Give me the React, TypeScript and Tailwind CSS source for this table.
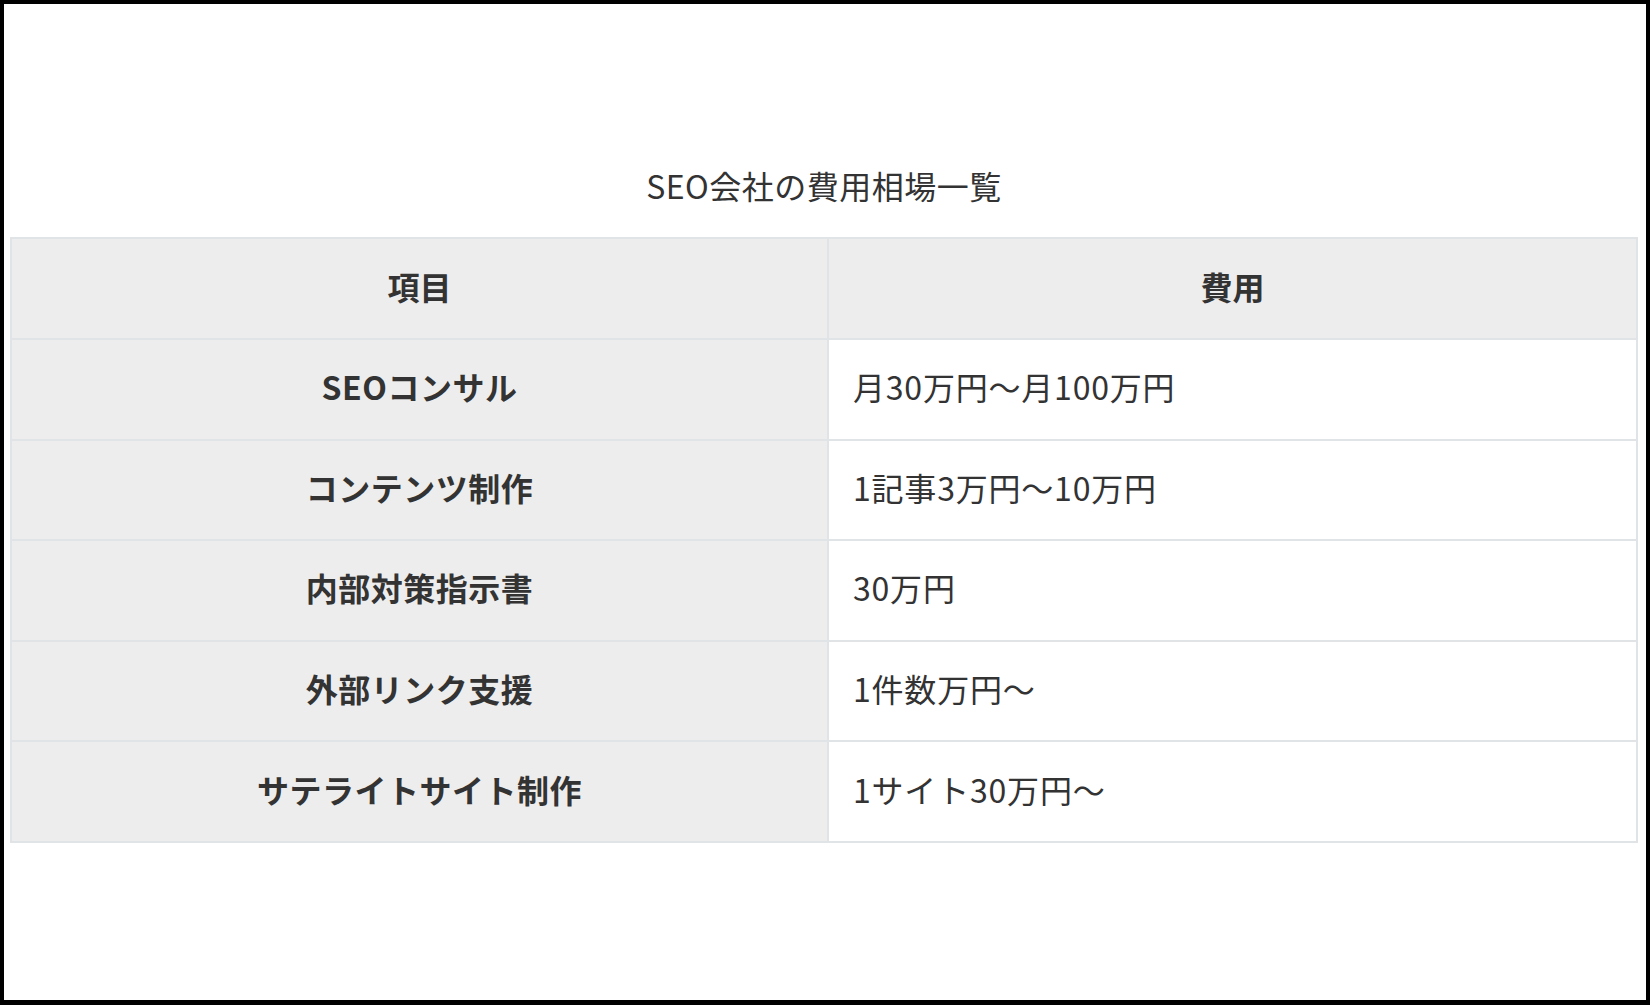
import React from 'react';

const rows: [string, string][] = [
  ['SEOコンサル', '月30万円〜月100万円'],
  ['コンテンツ制作', '1記事3万円〜10万円'],
  ['内部対策指示書', '30万円'],
  ['外部リンク支援', '1件数万円〜'],
  ['サテライトサイト制作', '1サイト30万円〜'],
];

export default function App() {
  return (
    <div
      className="w-[1650px] h-[1005px] bg-black pt-[4px] pl-[4px] pr-[4px] pb-[5px]"
      style={{ fontFamily: '"Noto Sans CJK JP", "Noto Sans", sans-serif' }}
    >
      <div className="h-full bg-white pl-[6px] pr-[8px] pt-[161px]">
        {/* caption */}
        <p className="text-center text-[32px] leading-[40px] text-[#333] tracking-[0.5px]">SEO会社の費用相場一覧</p>
        <table className="mt-[32px] w-full border-collapse table-fixed text-[32px] text-[#333]">
          <colgroup>
            <col className="w-[817px]" />
            <col />
          </colgroup>
          <thead>
            <tr className="h-[101px] bg-[#ededed]">
              <th className="border-2 border-[#e1e4e7] font-bold text-center pb-[6px]">項目</th>
              <th className="border-2 border-[#e1e4e7] font-bold text-center pb-[6px]">費用</th>
            </tr>
          </thead>
          <tbody>
            {rows.map(([item, cost]) => (
              <tr key={item} className="h-[100.6px]">
                <td className="border-2 border-[#e1e4e7] bg-[#ededed] font-bold text-center tracking-[0.5px] pb-[6px]">{item}</td>
                <td className="border-2 border-[#e1e4e7] bg-white pl-[24px] tracking-[0.8px] pb-[6px]">{cost}</td>
              </tr>
            ))}
          </tbody>
        </table>
      </div>
    </div>
  );
}
